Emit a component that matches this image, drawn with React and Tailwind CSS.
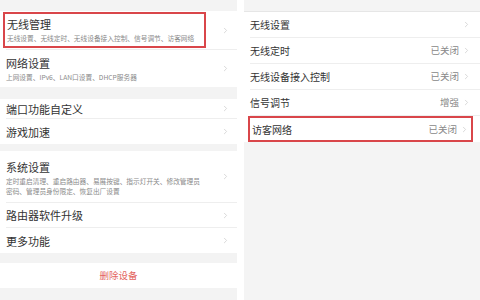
import { ChevronRight } from "lucide-react";

const font = { fontFamily: '"Noto Sans CJK SC", "Noto Sans", sans-serif' };

function Chevron() {
  return <ChevronRight className="w-[9px] h-[9px] text-[#cccccc] shrink-0" strokeWidth={2} />;
}

function LeftRow({ title, sub, h, boxed, last }) {
  return (
    <div className={`flex items-center pr-[7px] ${h} ${last ? "" : "border-b border-[#eeeeee]"} ml-[6px]`}>
      <div className={`flex-1 flex flex-col justify-center ${boxed ? "border-2 border-[#d9464a] -ml-[3px] pl-[2px] mr-[15px] self-stretch my-[1px]" : ""}`}>
        <div className="text-[11px] leading-[14px] text-[#333]">{title}</div>
        {sub && (
          <div className="text-[6.7px] leading-[10px] text-[#8a8a8a] mt-[2px] whitespace-nowrap">{sub}</div>
        )}
      </div>
      <Chevron />
    </div>
  );
}

function RightRow({ title, value, boxed, last }) {
  return (
    <div className={`h-[26px] flex items-center ${boxed ? "border-2 border-[#d9464a] ml-[4px] mr-[7px] pl-[2px] pr-[2px]" : "ml-[6px] pr-[9px]"} ${last || boxed ? "" : "border-b border-[#eeeeee]"}`}>
      <div className="flex-1 text-[10px] text-[#333]">{title}</div>
      {value && <div className="text-[9.5px] text-[#888] mr-[3px]">{value}</div>}
      <Chevron />
    </div>
  );
}

export default function App() {
  return (
    <div className="w-[480px] h-[300px] flex bg-white overflow-hidden" style={font}>
      {/* left phone */}
      <div className="w-[237px] h-full bg-[#f3f3f3] flex flex-col">
        <div className="h-[11px] shrink-0" />
        <div className="bg-white">
          <LeftRow h="h-[39px]" title="无线管理" sub="无线设置、无线定时、无线设备接入控制、信号调节、访客网络" boxed />
          <LeftRow h="h-[37px]" title="网络设置" sub="上网设置、IPv6、LAN口设置、DHCP服务器" last />
        </div>
        <div className="h-[12px] shrink-0" />
        <div className="bg-white">
          <LeftRow h="h-[20px]" title="端口功能自定义" />
          <LeftRow h="h-[25px]" title="游戏加速" last />
        </div>
        <div className="h-[7px] shrink-0" />
        <div className="bg-white">
          <div className="flex items-center pr-[7px] h-[52px] border-b border-[#eeeeee] ml-[6px]">
            <div className="flex-1 pt-[2px]">
              <div className="text-[11px] leading-[14px] text-[#333]">系统设置</div>
              <div className="text-[6.7px] leading-[10px] text-[#8a8a8a] mt-[2px] w-[200px]">
                定时重启清理、重启路由器、易展按键、指示灯开关、修改管理员密码、管理员身份限定、恢复出厂设置
              </div>
            </div>
            <Chevron />
          </div>
          <LeftRow h="h-[25px]" title="路由器软件升级" />
          <LeftRow h="h-[25px]" title="更多功能" last />
        </div>
        <div className="h-[10px] shrink-0" />
        <div className="bg-white h-[25px] flex items-center justify-center text-[9.5px] text-[#e3665f]">删除设备</div>
      </div>

      {/* divider */}
      <div className="w-[7px] h-full bg-white" />

      {/* right phone */}
      <div className="flex-1 h-full bg-[#f4f4f4] flex flex-col">
        <div className="h-[12px] shrink-0 border-b border-[#e6e6e6]" />
        <div className="bg-white">
          <RightRow title="无线设置" />
          <RightRow title="无线定时" value="已关闭" />
          <RightRow title="无线设备接入控制" value="已关闭" />
          <RightRow title="信号调节" value="增强" />
          <RightRow title="访客网络" value="已关闭" boxed last />
        </div>
      </div>
    </div>
  );
}
